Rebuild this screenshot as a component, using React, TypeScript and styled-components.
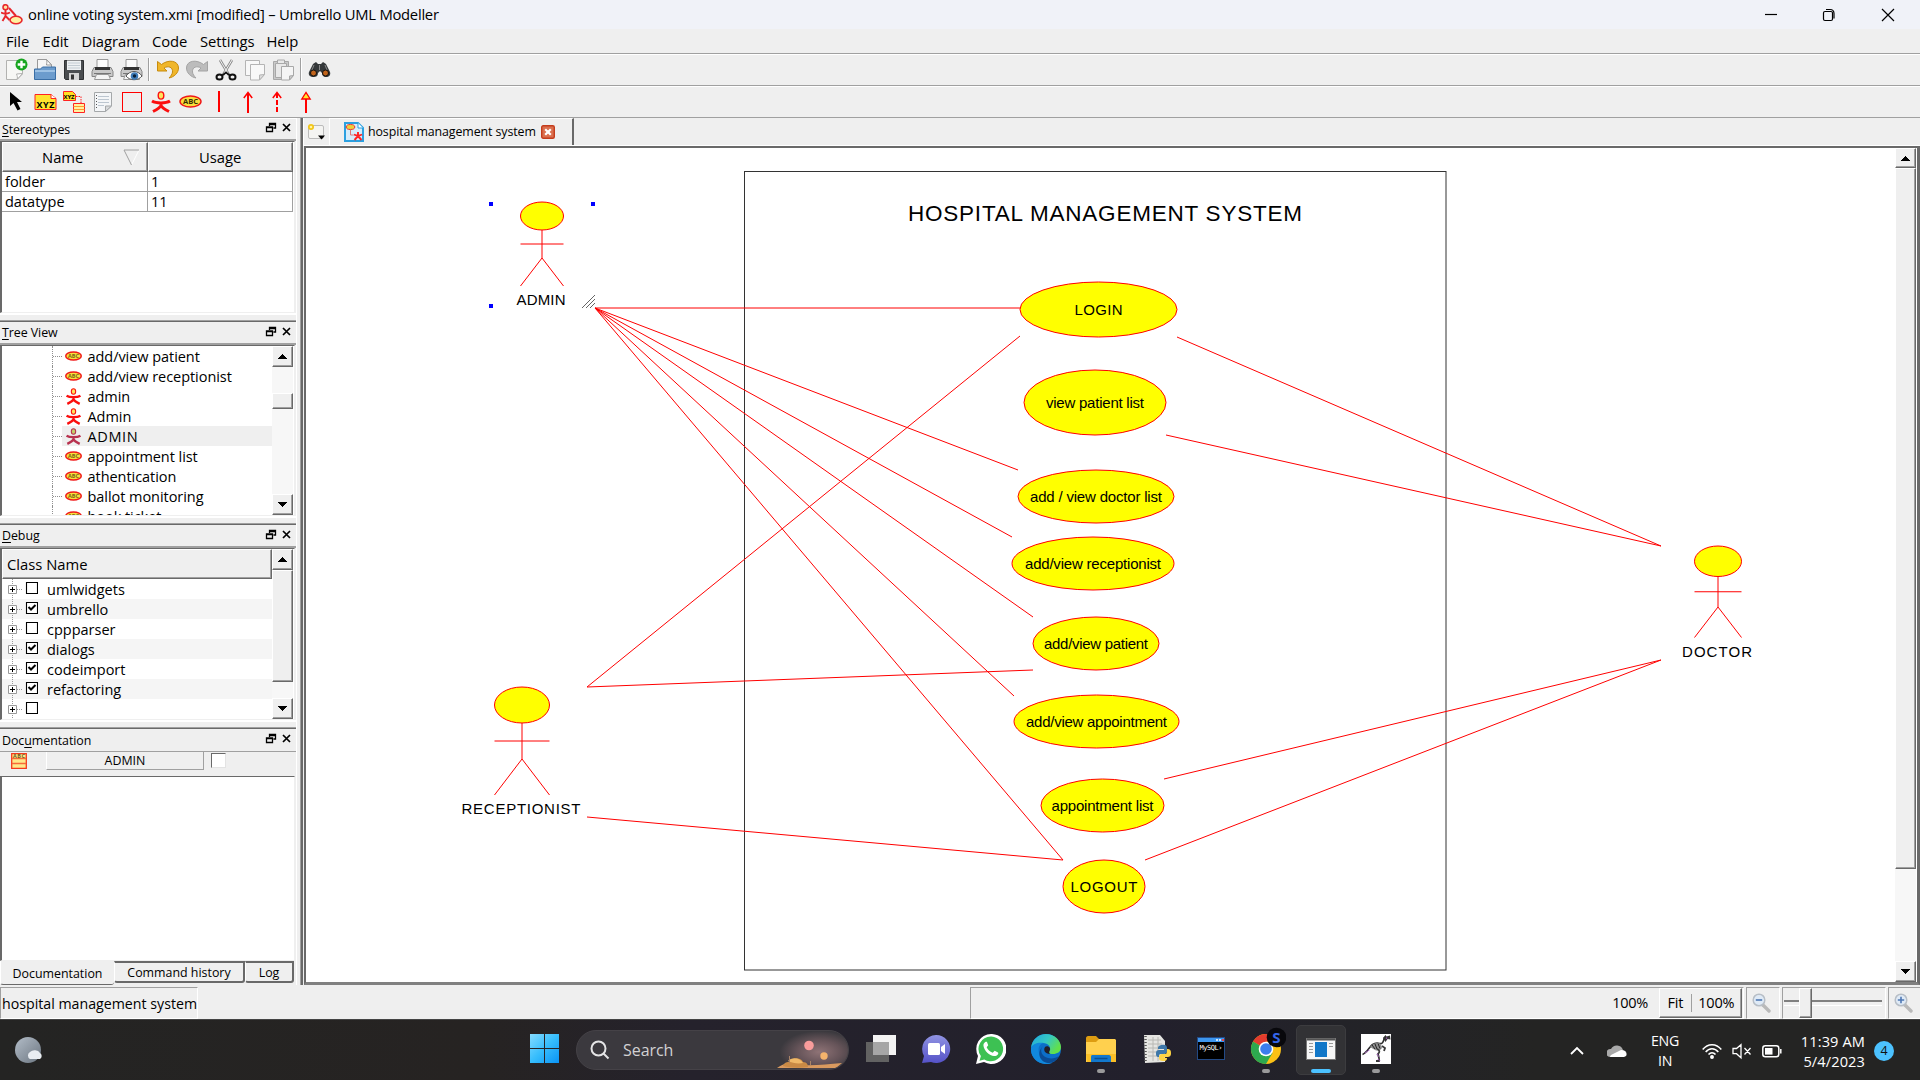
import React from 'react';
import styled, { createGlobalStyle, css } from 'styled-components';

const GlobalStyle = createGlobalStyle`
  * { box-sizing: border-box; }
  body { margin: 0; overflow: hidden; background: #efefef; }
`;

const ui = '"Open Sans", "Noto Sans", sans-serif';
const arial = '"Liberation Sans", Arial, sans-serif';

const raised = css`
  border-style: solid;
  border-width: 1px;
  border-color: #fff #696969 #696969 #fff;
  box-shadow: inset -1px -1px 0 #a0a0a0;
  background: #efefef;
`;
const sunken = css`
  border-style: solid;
  border-width: 1px;
  border-color: #a0a0a0 #fff #fff #a0a0a0;
`;

const Screen = styled.div`
  width: 1920px;
  height: 1080px;
  display: flex;
  flex-direction: column;
  background: #efefef;
  color: #000;
  font: 14.5px ${ui};
  white-space: nowrap;
  overflow: hidden;
`;
const Label = styled.span<{ $size?: number; $gap?: number }>`
  font-size: ${p => p.$size ?? 14.5}px;
  letter-spacing: ${p => p.$gap ?? 0}px;
  line-height: 1;
`;

/* ---------- window chrome ---------- */
const TitleBar = styled.header`
  height: 29px;
  flex: none;
  display: flex;
  align-items: center;
  background: #f0f2f8;
  padding-left: 1px;
  svg { flex: none; }
`;
const TitleText = styled(Label)`
  margin-left: 5px;
  flex: 1;
`;
const WindowButtons = styled.div`
  display: flex;
  width: 176px;
  height: 28px;
`;
const MenuBar = styled.nav`
  height: 24px;
  flex: none;
  display: flex;
  align-items: center;
  padding-left: 6px;
`;
const MenuItem = styled.div<{ $w: number }>`
  width: ${p => p.$w}px;
  font-size: 14.8px;
  line-height: 20px;
  letter-spacing: -0.05px;
`;
const ToolBar = styled.div<{ $indent?: number }>`
  height: 32px;
  flex: none;
  display: flex;
  align-items: center;
  border-top: 1px solid #a0a0a0;
  box-shadow: inset 0 1px 0 #fff;
  padding-left: ${p => p.$indent ?? 1}px;
`;
const Tool = styled.div`
  width: 29px;
  height: 28px;
  display: grid;
  place-items: center;
`;
const ToolSeparator = styled.div`
  width: 2px;
  height: 23px;
  margin: 0 3px 0 2px;
  background: #a0a0a0;
  border-right: 1px solid #fff;
`;

/* ---------- docks ---------- */
const Workspace = styled.main`
  height: 868px;
  flex: none;
  display: flex;
  border-top: 1px solid #a0a0a0;
`;
const Docks = styled.aside`
  width: 296px;
  flex: none;
  display: flex;
  flex-direction: column;
  border-top: 1px solid #fff;
`;
const Dock = styled.section<{ $h: number }>`
  height: ${p => p.$h}px;
  flex: none;
  display: flex;
  flex-direction: column;
`;
const DockTitle = styled.div<{ $h: number; $line?: number }>`
  height: ${p => p.$h}px;
  flex: none;
  display: flex;
  align-items: center;
  padding: 1px 1px 0 2px;
  border-bottom: ${p => p.$line ?? 2}px solid #a0a0a0;
  font-size: 12.4px;
  letter-spacing: -0.05px;
  span { flex: 1; line-height: 16px; }
  svg { margin-bottom: 3px; }
  u { text-underline-offset: 2px; text-decoration-thickness: 1px; }
`;
const DockGap = styled.div`
  height: 9px;
  flex: none;
  border-top: 2px solid #fff;
  border-bottom: 1px solid #696969;
  box-shadow: inset 0 -1px 0 #a0a0a0;
`;
const Frame = styled.div`
  flex: 1;
  width: 295px;
  min-height: 0;
  display: flex;
  background: #fff;
  border-top: 1px solid #696969;
  border-left: 2px solid #696969;
  border-right: 1px solid #efefef;
  border-bottom: 1px solid #efefef;
  overflow: hidden;
`;
const Table = styled.div`
  width: 291px;
  height: 70px;
  display: grid;
  grid-template-columns: 146px 145px;
  grid-template-rows: 30px 20px 20px;
`;
const HeadCell = styled.div<{ $indent?: number }>`
  ${raised}
  border-left-color: #fff;
  display: flex;
  align-items: center;
  justify-content: space-between;
  padding: 0 7px 0 ${p => p.$indent ?? 0}px;
  font-size: 14.8px;
`;
const Cell = styled.div`
  border-right: 1px solid #a0a0a0;
  border-bottom: 1px solid #a0a0a0;
  padding-left: 3px;
  line-height: 19px;
`;
const Rows = styled.div`
  width: 270px;
  flex: none;
  overflow: hidden;
`;
const TreeRow = styled.div`
  height: 20px;
  margin-left: 50px;
  display: flex;
  align-items: center;
  border-left: 1px dotted #909090;
  &::before { content: ''; width: 9px; border-top: 1px dotted #909090; }
`;
const TreeItem = styled.div<{ $on?: boolean }>`
  flex: 1;
  height: 20px;
  display: flex;
  align-items: center;
  gap: 6px;
  padding-left: 2.5px;
  line-height: 19px;
  letter-spacing: ${p => (p.$on ? 0.6 : -0.05)}px;
  background: ${p => (p.$on ? '#efefef' : 'transparent')};
`;
const ScrollTrack = styled.div`
  width: 21px;
  flex: none;
  display: flex;
  flex-direction: column;
  background: #f7f7f7;
`;
const ScrollButton = styled.div<{ $h?: number }>`
  ${raised}
  height: ${p => p.$h ?? 21}px;
  flex: none;
  display: grid;
  place-items: center;
`;
const Thumb = styled.div<{ $h: number }>`
  ${raised}
  height: ${p => p.$h}px;
  flex: none;
`;
const Space = styled.div<{ $h?: number }>`
  ${p => (p.$h === undefined ? 'flex: 1;' : `flex: none; height: ${p.$h}px;`)}
`;
const ClassHead = styled.div`
  ${raised}
  height: 30px;
  padding-left: 4px;
  line-height: 28px;
  font-size: 14.8px;
`;
const CheckRow = styled.div<{ $alt: boolean }>`
  height: 20px;
  display: flex;
  align-items: center;
  background: ${p => (p.$alt ? '#f5f5f5' : '#fff')};
  padding-left: 5px;
  line-height: 20px;
  svg { margin-right: 9px; flex: none; }
  span { padding-top: 2px; }
`;
const DocRow = styled.div`
  height: 24px;
  flex: none;
  display: flex;
  padding-left: 11px;
`;
const DocButton = styled.div`
  width: 158px;
  height: 18px;
  margin: 0 7px 0 19px;
  border: solid;
  border-width: 0 1px 1px 1px;
  border-color: #fff #a0a0a0 #a0a0a0 #fff;
  text-align: center;
  font-size: 12.4px;
  line-height: 18px;
`;
const DocCheck = styled.div`
  width: 15px;
  height: 15px;
  margin-top: 1px;
  background: #fff;
  border: 1px solid;
  border-color: #696969 #e3e3e3 #e3e3e3 #696969;
`;
const BottomTabs = styled.div`
  height: 24px;
  flex: none;
  display: flex;
  align-items: flex-start;
  font-size: 12.4px;
`;
const BottomTab = styled.div<{ $w: number; $on?: boolean }>`
  width: ${p => p.$w}px;
  height: ${p => (p.$on ? 24 : 22)}px;
  line-height: ${p => (p.$on ? 25 : 19)}px;
  text-align: center;
  border: solid;
  border-width: ${p => (p.$on ? '0 0 1px 1px' : '2px 2px 2px 1px')};
  border-color: #696969 #696969 #696969 #fff;
  border-radius: 0 0 3px 3px;
`;
const Splitter = styled.div`
  width: 7px;
  flex: none;
  border-left: 1px solid #fff;
  border-right: 2px solid #696969;
  box-shadow: inset -1px 0 0 #a0a0a0;
`;

/* ---------- document area ---------- */
const Document = styled.section`
  flex: 1;
  display: flex;
  flex-direction: column;
`;
const TabStrip = styled.div`
  height: 28px;
  flex: none;
  display: flex;
  border-bottom: 1px solid #fff;
`;
const NewTab = styled.div`
  width: 27px;
  height: 27px;
  display: grid;
  place-items: center;
  border-right: 1px solid #fff;
  border-left: 1px solid #fff;
`;
const ActiveTab = styled.div`
  width: 244px;
  height: 27px;
  display: flex;
  align-items: center;
  padding-left: 14px;
  border-right: 2px solid #696969;
  border-top: 1px solid #fff;
`;
const TabText = styled(Label)`
  width: 173px;
  margin-left: 4px;
`;
const CanvasFrame = styled.div`
  flex: 1;
  min-height: 0;
  display: flex;
  margin-left: 1px;
  background: #fff;
  border-style: solid;
  border-width: 2px 3px 3px 2px;
  border-color: #696969 #696969 #808080 #696969;
`;
const Diagram = styled.svg`
  display: block;
  width: 1589px;
  height: 834px;
  flex: none;
`;

/* ---------- status bar ---------- */
const StatusBar = styled.footer`
  height: 34px;
  flex: none;
  display: flex;
  align-items: flex-end;
`;
const StatusField = styled.div<{ $w: number; $ml?: number }>`
  ${sunken}
  width: ${p => p.$w}px;
  height: 32px;
  margin-left: ${p => p.$ml ?? 0}px;
  flex: none;
  display: flex;
  align-items: center;
  justify-content: flex-end;
`;
const StatusText = styled(Label)`
  width: 100%;
  padding: 2px 0 0 1px;
`;
const FitBox = styled.div`
  ${raised}
  width: 83px;
  height: 30px;
  margin: 0 1px 0 11px;
  display: flex;
  align-items: center;
`;
const FitPart = styled.div<{ $w: number; $line?: boolean }>`
  width: ${p => p.$w}px;
  text-align: center;
  line-height: 18px;
  border-right: ${p => (p.$line ? '1px solid #a0a0a0' : 'none')};
  letter-spacing: -0.2px;
`;
const ZoomButton = styled.div`
  width: 27px;
  svg { display: block; }
`;
const Slider = styled.div`
  width: 100%;
  height: 30px;
  padding-left: 1px;
  display: flex;
  align-items: center;
  &::before { content: ''; width: 15px; }
  &::after { content: ''; flex: 1; margin-right: 3px; }
  &::before, &::after {
    height: 3px;
    border-top: 2px solid #808080;
    border-bottom: 1px solid #fff;
  }
`;
const SliderThumb = styled.div`
  ${raised}
  width: 13px;
  height: 30px;
`;

/* ---------- taskbar ---------- */
const TaskBar = styled.div`
  height: 61px;
  flex: none;
  display: flex;
  align-items: flex-start;
  background: linear-gradient(90deg, #242423 0%, #262322 25%, #25222c 36%, #22202c 60%, #232328 70%, #242423 80%);
  border-top: 1px solid #444;
  color: #fff;
  svg { display: block; flex: none; }
`;
const Weather = styled.div`
  width: 517px;
  padding: 16px 0 0 14px;
`;
const Slot = styled.div<{ $on?: boolean }>`
  width: 50px;
  height: 50px;
  margin: 5px 2.5px 0;
  flex: none;
  display: flex;
  flex-direction: column;
  align-items: center;
  padding-top: 8px;
  border-radius: 5px;
  background: ${p => (p.$on ? '#323235' : 'transparent')};
  border: 1px solid ${p => (p.$on ? '#3c3c3f' : 'transparent')};
`;
const Indicator = styled.div<{ $on?: boolean }>`
  width: ${p => (p.$on ? 20 : 8)}px;
  height: 4px;
  margin-top: 5px;
  flex: none;
  border-radius: 2px;
  background: ${p => (p.$on ? '#4cc2ff' : '#9a9a9b')};
`;
const SearchBox = styled.div`
  width: 273px;
  height: 40px;
  margin: 10px 4px 0 4px;
  border-radius: 20px;
  border: 1px solid #454247;
  background: #3b393e;
  display: flex;
  align-items: center;
  padding-left: 13px;
  overflow: hidden;
`;
const SearchText = styled.span`
  flex: 1;
  padding-left: 13px;
  font-size: 16px;
  color: #d2d1d3;
  letter-spacing: -0.05px;
`;
const Tray = styled.div`
  margin-left: auto;
  width: 350px;
  height: 61px;
  padding-top: 1px;
  display: flex;
  align-items: center;
  font-size: 14.2px;
`;
const TrayText = styled.div<{ $w: number; $ml: number; $right?: boolean }>`
  width: ${p => p.$w}px;
  margin-left: ${p => p.$ml}px;
  line-height: 20px;
  font-size: ${p => (p.$right ? 14.6 : 14.2)}px;
  text-align: ${p => (p.$right ? 'right' : 'center')};
  letter-spacing: ${p => (p.$right ? 0.1 : -0.3)}px;
`;
const Badge = styled.div`
  width: 20px;
  height: 20px;
  margin-left: 9px;
  border-radius: 50%;
  background: #4cc2ff;
  color: #111;
  text-align: center;
  font-size: 12.5px;
  line-height: 20px;
`;
const TrayIcon = styled.div<{ $ml: number }>`
  margin-left: ${p => p.$ml}px;
`;

/* ---------- icons ---------- */
const Arrow = ({ up }: { up?: boolean }) => (
  <svg width="9" height="5" viewBox="0 0 9 5" shapeRendering="crispEdges">
    <path d={up ? 'M0 5L4.5 0L9 5z' : 'M0 0L4.5 5L9 0z'} />
  </svg>
);

const DockButtons = () => (
  <svg width="30" height="14" viewBox="0 0 30 14" fill="none" stroke="#000">
    <path d="M4.500 5V2.500h6v4.500h-2M4.500 3.500h6M1.500 6h6v4.500h-6zM1.500 6.500h6" strokeWidth="1.300" />
    <path d="M18 3l7 7M25 3l-7 7" strokeWidth="1.700" />
  </svg>
);

const AbcOval = ({ small }: { small?: boolean }) => (
  <svg width={small ? 17 : 23} height={small ? 10 : 13} viewBox="0 0 23 13">
    <ellipse cx="11.500" cy="6.500" rx="10.500" ry="5.500" fill="#f8e03c" stroke="#f01818" strokeWidth={small ? 2 : 1.5} />
    <text x="11.500" y="9.300" fontSize="7.500" fontWeight="bold" fontFamily={ui} textAnchor="middle" textLength="15" fill={small ? '#7a6412' : '#3a2c00'}>ABC</text>
  </svg>
);

const Person = ({ size = 22, color = '#fb0f0f', head = '#ffe45c' }: { size?: number; color?: string; head?: string }) => (
  <svg width={size} height={size} viewBox="0 0 22 22" fill="none" stroke={color}>
    <path d="M2 10c4 2.500 14 2.500 18 0M11 11v4M11 14.500c-1 2.500-4 4-8 6M11 14.500c1 2.500 4 4 8 6" strokeWidth="3" />
    <ellipse cx="11" cy="4.500" rx="2.800" ry="3.600" fill={head} strokeWidth="1.400" />
  </svg>
);

const XyzNote = () => (
  <svg width="23" height="18" viewBox="0 0 23 18">
    <path d="M1 1.500h16l5 4v11H1z" fill="#ffe32e" stroke="#f22" />
    <path d="M17 1.500v4h5" fill="#fff" stroke="#f22" />
    <text x="11.500" y="14.500" fontSize="9" fontWeight="bold" fontFamily={ui} textAnchor="middle" textLength="18">XYZ</text>
  </svg>
);

const XyzLinked = () => (
  <svg width="24" height="23" viewBox="0 0 24 23">
    <path d="M1.500 1.500h9l3 3v6h-12z" fill="#ffdf20" stroke="#f22" />
    <text x="7" y="9" fontSize="6" fontWeight="bold" fontFamily={ui} textAnchor="middle" textLength="11">XYZ</text>
    <path d="M14 6.500h5V13" fill="none" stroke="#f22" strokeDasharray="1.500 1" />
    <path d="M11.500 13.500h11v9h-11z" fill="#fff3a0" stroke="#f22" />
    <path d="M11.500 16.500h11M11.500 19.500h11" stroke="#f93" />
  </svg>
);

const FolderPage = () => (
  <svg width="24" height="23" viewBox="0 0 24 23">
    <path d="M4.500 1.500h9l5 5V15h-14z" fill="#f6f6f6" stroke="#999" />
    <path d="M13.500 1.500c1 2 0 4 0 5.500h5z" fill="#fff" stroke="#999" />
    <path d="M1.500 11h6l2-2h13v12.500h-21z" fill="#6c9ccd" stroke="#3a6ea5" />
    <path d="M2 13h20" stroke="#9cc1e4" strokeWidth="2" />
  </svg>
);

const NewPage = () => (
  <svg width="24" height="23" viewBox="0 0 24 23">
    <path d="M2.500 2.500h16V16l-5.500 5.500H2.500z" fill="#f7f7f5" stroke="#b2b2b0" />
    <path d="M18.500 15.500l-5.500 6c1-2 0-4-.5-5.500z" fill="#fff" stroke="#b2b2b0" />
    <circle cx="17.500" cy="6.500" r="6" fill="#18a51f" />
    <path d="M17.500 2.700v7.600M13.700 6.500h7.600" stroke="#fff" strokeWidth="2.400" />
  </svg>
);

const Floppy = () => (
  <svg width="22" height="22" viewBox="0 0 22 22">
    <path d="M1.500 1.500h19v19h-18l-1-1z" fill="#4a4d50" stroke="#2e3032" />
    <path d="M4 1.500h14V11H4z" fill="#eef1f3" />
    <path d="M5 4h12M5 6.500h12M5 9h12" stroke="#c3ccd3" />
    <path d="M6 14h10v7H6z" fill="#d4d4d4" />
    <path d="M8 15.500h3v5H8z" fill="#333" />
  </svg>
);

const Printer = ({ eye }: { eye?: boolean }) => (
  <svg width="23" height="23" viewBox="0 0 23 23">
    <path d="M6 1.500h11V11H6z" fill="#fbfbfb" stroke="#999" />
    <path d="M3 9.500h17l2 4v5H1v-5z" fill="#c9c9c9" stroke="#858585" />
    <path d="M4 9h15v3H4z" fill="#333" />
    <path d="M5.500 16.500h12l2 5h-16z" fill="#f5f5f5" stroke="#999" />
    <path d="M3 15.500h17" stroke="#777" />
    {eye && (
      <g>
        <path d="M6 18c4-6 12-6 16 0c-4 5-12 5-16 0z" fill="#fff" stroke="#555" />
        <circle cx="14.500" cy="18" r="3.800" fill="#3f7cb9" />
        <circle cx="14.500" cy="18" r="1.700" fill="#0b2036" />
      </g>
    )}
  </svg>
);

const Undo = ({ gray }: { gray?: boolean }) => (
  <svg width="24" height="20" viewBox="0 0 24 20">
    <path
      transform={gray ? 'matrix(-1 0 0 1 24 0)' : undefined}
      d="M1.500 1.500v9.500h9.500l-3-3c4-2.500 9-1 8.500 4c-.2 2-1.500 4-3.500 6c5-1 9.500-5 9.500-10c0-7.500-10-9-17-3.500z"
      fill={gray ? '#bcbcbc' : '#f0b62a'}
      stroke={gray ? '#a4a4a4' : '#c78b0d'}
    />
  </svg>
);

const Scissors = () => (
  <svg width="22" height="22" viewBox="0 0 22 22" fill="none">
    <path d="M5 1l9 15M17 1L8 16" stroke="#8b8b8b" strokeWidth="2.600" />
    <path d="M5 1l9 15M17 1L8 16" stroke="#f2f2f2" strokeWidth="1" />
    <ellipse cx="4.500" cy="18" rx="3" ry="2.600" stroke="#111" strokeWidth="2" />
    <ellipse cx="17.500" cy="18" rx="3" ry="2.600" stroke="#111" strokeWidth="2" />
    <path d="M7 16.500l4-3l4 3" stroke="#111" strokeWidth="1.600" />
  </svg>
);

const Copy = () => (
  <svg width="22" height="22" viewBox="0 0 22 22" fill="#f8f8f8" stroke="#b4b4b4">
    <path d="M1.500 1.500h14v15h-14z" />
    <path d="M6.500 5.500h14v10l-5 5.500h-9z" />
    <path d="M20.500 15.500l-5 5.500v-5z" fill="#ddd" />
  </svg>
);

const Paste = () => (
  <svg width="23" height="22" viewBox="0 0 23 22" stroke="#a8a8a8">
    <path d="M1.500 2.500h15v18h-15z" fill="#c9c9c9" />
    <path d="M3.500 4.500h11v14h-11z" fill="#e9e9e9" />
    <path d="M5.500 1h7v3.500h-7z" fill="#e9e9e9" />
    <path d="M9.500 7.500h12v9l-4 4.500h-8z" fill="#f5f5f5" />
    <path d="M21.500 16.500l-4 4.500v-4z" fill="#ccc" />
  </svg>
);

const Binoculars = () => (
  <svg width="23" height="16" viewBox="0 0 23 16">
    <path d="M5 2l3-2l2 2h3l2-2l3 2l4 8c1 3-1 5-4 5c-3 0-4-2-4-4l-2-2l-2 2c0 3-2 4-4 4c-4 0-6-2-5-5z" fill="#35383a" />
    <path d="M6 3l-2 5M17 3l2 5M11.500 3v5" stroke="#888" />
    <circle cx="5.500" cy="11" r="3" fill="#c2641b" stroke="#111" />
    <circle cx="17.500" cy="11" r="3" fill="#c2641b" stroke="#111" />
  </svg>
);

const Pointer = () => (
  <svg width="14" height="19" viewBox="0 0 14 19">
    <path d="M1 0v14l3.500-3l4 7.500l3-1.500l-3.500-7h5z" />
  </svg>
);

const NotePage = () => (
  <svg width="20" height="22" viewBox="0 0 20 22">
    <path d="M1.500 1.500h17V15l-6 5.500h-11z" fill="#f4f6f8" stroke="#a5a8aa" />
    <path d="M18.500 15l-6 5.500v-5.500z" fill="#d8dadc" stroke="#a5a8aa" />
    <path d="M5 5.500h11M5 8.500h11M5 11.500h11M5 14.500h6" stroke="#bcc6d0" />
    <path d="M3.500 4v14" stroke="#555" strokeDasharray="1 2" />
  </svg>
);

const LineTool = ({ kind }: { kind: 'line' | 'arrow' | 'dashed' | 'inherit' }) => (
  <svg width="12" height="22" viewBox="0 0 12 22" fill="none" stroke="#f00">
    <path d={kind === 'line' ? 'M6 0v21' : 'M6 2v20'} strokeWidth="2" strokeDasharray={kind === 'dashed' ? '5 2' : undefined} />
    {(kind === 'arrow' || kind === 'dashed') && <path d="M1.800 7L6 1.500L10.200 7" strokeWidth="1.500" />}
    {kind === 'inherit' && <path d="M1.800 8L6 1.500L10.200 8z" fill="#ffe92e" strokeWidth="1.300" />}
  </svg>
);

const AppLogo = () => (
  <svg width="22" height="21" viewBox="0 0 22 21" fill="none" stroke="#e8262b">
    <circle cx="4.500" cy="3.200" r="2.500" fill="#ffe0a0" strokeWidth="1.500" />
    <path d="M4.500 6v6M0 8.500c3 1.500 6 1.500 9 0M4.500 12l-3 5M4.500 12l4 4M8 4l7 8" strokeWidth="1.900" />
    <ellipse cx="15" cy="16" rx="6" ry="3.800" fill="#fff1a0" strokeWidth="1.600" />
  </svg>
);

const DiagramIcon = () => (
  <svg width="20" height="20" viewBox="0 0 20 20">
    <path d="M1 1h13l5 5v13H1z" fill="#d6ecfa" stroke="#2ba0e0" strokeWidth="2" />
    <path d="M14 1v5h5" fill="#fff" stroke="#2ba0e0" />
    <ellipse cx="6.500" cy="5" rx="4.300" ry="2.500" fill="#ecd23a" stroke="#e33" />
    <path d="M6.500 8v5h3" fill="none" stroke="#d77" />
    <path d="M10 12.500c2 1 6 1 8 0M14 10v4M14 14l-3.500 4M14 14l3.500 4" fill="none" stroke="#f22" strokeWidth="1.900" />
  </svg>
);

const NewTabIcon = () => (
  <svg width="19" height="18" viewBox="0 0 19 18">
    <rect x="1.500" y="2.500" width="15" height="13" rx="1.500" fill="#f4f4f2" stroke="#bbb" />
    <circle cx="4" cy="4" r="3" fill="#f2c518" />
    <circle cx="4" cy="4" r="1.300" fill="#fff3a0" />
    <path d="M11 12.500h7l-3.500 4z" />
  </svg>
);

const CloseTab = () => (
  <svg width="14" height="14" viewBox="0 0 14 14">
    <rect x=".7" y=".7" width="12.600" height="12.600" rx="1.500" fill="#db6f4e" stroke="#c43c1c" strokeWidth="1.400" />
    <path d="M4.200 4.200l5.600 5.600M9.800 4.200L4.200 9.800" stroke="#fff" strokeWidth="2.200" />
  </svg>
);

const Magnifier = ({ plus }: { plus?: boolean }) => (
  <svg width="19" height="20" viewBox="0 0 19 20">
    <path d="M11 12l6 6" stroke="#b9b9b9" strokeWidth="3.400" strokeLinecap="round" />
    <circle cx="7" cy="7" r="5.800" fill="#dfeaf6" stroke="#b7bec6" strokeWidth="1.500" />
    <path d={plus ? 'M3.800 7h6.400M7 3.800v6.400' : 'M3.800 7h6.400'} stroke="#4f78b4" strokeWidth="1.600" />
  </svg>
);

const DocIcon = () => (
  <svg width="16" height="17" viewBox="0 0 16 17">
    <path d="M.7 1.700h14.600v14.600H.7z" fill="#ffe98a" stroke="#f43a1c" strokeWidth="1.300" />
    <path d="M1 6.500h14M1 11.500h14" stroke="#f76a38" strokeWidth="1.400" />
    <text x="8" y="5.500" fontSize="5.500" fontWeight="bold" fontFamily={ui} textAnchor="middle" textLength="12" fill="#6d5b20">ABC</text>
  </svg>
);

const TreeCheck = ({ on }: { on: boolean }) => (
  <svg width="31" height="20" viewBox="0 0 31 20" fill="none">
    <path d="M5.500 0v20M10 10.500h6" stroke="#999" strokeDasharray="1 1" />
    <path d="M1.500 6.500h8v8h-8z" fill="#fff" stroke="#999" />
    <path d="M3 10.500h5M5.500 8v5" stroke="#000" />
    <path d="M19.500 3.500h11v11h-11z" fill="#fff" stroke="#000" strokeWidth="1.100" />
    {on && <path d="M21.500 8l2.500 2.500l4.500-4.500" stroke="#000" strokeWidth="2" />}
  </svg>
);

/* ---------- diagram ---------- */
const links = [
  [595, 308, 1020, 308], [595, 308, 1018, 470], [595, 308, 1012, 537], [595, 308, 1033, 617],
  [595, 308, 1014, 696], [595, 308, 1063, 860], [587, 687, 1020, 336], [587, 687, 1033, 670],
  [587, 817, 1063, 860], [1177, 337, 1661, 546], [1166, 435, 1661, 546], [1164, 779, 1661, 660],
  [1145, 860, 1661, 660],
];
type UseCase = { name: string; cx: number; cy: number; rx: number; ry: number; w: number };
const useCases: UseCase[] = [
  { name: 'LOGIN', cx: 1098.5, cy: 309.5, rx: 78.5, ry: 27.5, w: 48 },
  { name: 'view patient list', cx: 1095, cy: 402.5, rx: 71, ry: 32.5, w: 98 },
  { name: 'add / view doctor list', cx: 1096, cy: 496.5, rx: 78, ry: 26.5, w: 132 },
  { name: 'add/view receptionist', cx: 1093, cy: 563.5, rx: 81, ry: 26.5, w: 136 },
  { name: 'add/view patient', cx: 1096, cy: 643.5, rx: 63, ry: 26.5, w: 104 },
  { name: 'add/view appointment', cx: 1096.5, cy: 721.5, rx: 82.5, ry: 26.5, w: 141 },
  { name: 'appointment list', cx: 1102.5, cy: 805.5, rx: 61.5, ry: 26.5, w: 102 },
  { name: 'LOGOUT', cx: 1104, cy: 886.5, rx: 41, ry: 26.5, w: 67 },
];
type Actor = { name: string; cx: number; top: number; rx: number; h: number; w: number; base: number };
const actors: Actor[] = [
  { name: 'ADMIN', cx: 542, top: 202, rx: 21.5, h: 28, w: 49, base: 305 },
  { name: 'RECEPTIONIST', cx: 522, top: 687, rx: 27.5, h: 36, w: 119, base: 814 },
  { name: 'DOCTOR', cx: 1718, top: 546, rx: 23.5, h: 30.5, w: 70, base: 657 },
];

const UmlDiagram = () => (
  <Diagram viewBox="306 148 1589 834" fontFamily={arial} fontSize="15" textAnchor="middle">
    <rect x="744.500" y="171.500" width="701.500" height="798.500" fill="none" stroke="#333" />
    <text x="1105" y="221" fontSize="22.500" textLength="394">HOSPITAL MANAGEMENT SYSTEM</text>
    <g stroke="#f00" strokeWidth="1">
      {links.map(([a, b, c, d], i) => <line key={i} x1={a} y1={b} x2={c} y2={d} />)}
    </g>
    {useCases.map(u => (
      <g key={u.name}>
        <ellipse cx={u.cx} cy={u.cy} rx={u.rx} ry={u.ry} fill="#ff0" stroke="#f00" />
        <text x={u.cx} y={u.cy + 5.5} textLength={u.w}>{u.name}</text>
      </g>
    ))}
    {actors.map(a => {
      const foot = a.top + a.h * 3;
      return (
        <g key={a.name}>
          <g stroke="#f00" fill="none">
            <ellipse cx={a.cx} cy={a.top + a.h / 2} rx={a.rx} ry={a.h / 2} fill="#ff0" />
            <path d={`M${a.cx} ${a.top + a.h}V${a.top + a.h * 2}M${a.cx - a.rx} ${a.top + a.h * 1.5}h${a.rx * 2}`} />
            <path d={`M${a.cx - a.rx} ${foot}L${a.cx} ${a.top + a.h * 2}L${a.cx + a.rx} ${foot}`} />
          </g>
          <text x={a.cx - 1} y={a.base} textLength={a.w}>{a.name}</text>
        </g>
      );
    })}
    <g fill="#00f">
      <rect x="489" y="202" width="4" height="4" />
      <rect x="591" y="202" width="4" height="4" />
      <rect x="489" y="304" width="4" height="4" />
    </g>
    <path d="M582 308l13-13M586 308l9-9M590 308l5-5" stroke="#666" />
  </Diagram>
);

/* ---------- taskbar pictures ---------- */
const WinLogo = () => (
  <svg width="29" height="29" viewBox="0 0 29 29">
    <defs>
      <linearGradient id="win" x1="0" y1="0" x2="1" y2="1">
        <stop offset="0" stopColor="#85dbff" />
        <stop offset=".5" stopColor="#36bdfc" />
        <stop offset="1" stopColor="#0a93f5" />
      </linearGradient>
    </defs>
    <path d="M0 0h14v14H0zM15 0h14v14H15zM0 15h14v14H0zM15 15h14v14H15z" fill="url(#win)" />
  </svg>
);

const SearchScene = () => (
  <svg width="72" height="38" viewBox="0 0 72 38">
    <defs>
      <radialGradient id="dusk" cx=".6" cy=".55" r=".55">
        <stop offset="0" stopColor="#8f7376" />
        <stop offset=".55" stopColor="#665459" />
        <stop offset="1" stopColor="#3b393e" />
      </radialGradient>
    </defs>
    <rect width="72" height="38" fill="url(#dusk)" />
    <circle cx="33" cy="14.500" r="4.800" fill="#f99c9b" />
    <circle cx="48" cy="25" r="3.700" fill="#f5b36c" />
    <path d="M1 37c8-6 14-4 24-3c14 1 26-1 41-2l-6 5z" fill="#d99a5f" />
    <path d="M7 35c1-4 5-4 6-4c3-5 12-5 14 0c4 0 5 3 5 5c-8 1-18 1-25-1z" fill="#c98a45" />
    <path d="M12 30c3-4 12-4 15 2c-5 1-11 0-15-2z" fill="#efb868" />
    <path d="M13.500 25v7M34.500 30v4" stroke="#a98468" />
  </svg>
);

const TaskView = () => (
  <svg width="30" height="30" viewBox="0 0 30 30">
    <rect x="7" y="1" width="23" height="20" fill="#f3f3f3" />
    <rect x="0" y="8" width="23" height="20" fill="#626262" />
    <rect x="7" y="8" width="16" height="13" fill="#a6a6a6" />
  </svg>
);

const Chat = () => (
  <svg width="30" height="30" viewBox="0 0 30 30">
    <defs>
      <linearGradient id="chat" x1="0" y1="0" x2="0" y2="1">
        <stop offset="0" stopColor="#9093e2" />
        <stop offset="1" stopColor="#5552c8" />
      </linearGradient>
    </defs>
    <path d="M15 1a14 14 0 1 1-5 27L1 29l2-7A14 14 0 0 1 15 1z" fill="url(#chat)" />
    <rect x="7" y="9" width="12" height="12" rx="1.500" fill="#fff" />
    <path d="M20 13l4-3v10l-4-3z" fill="#fff" />
  </svg>
);

const WhatsApp = () => (
  <svg width="30" height="30" viewBox="0 0 30 30">
    <path d="M15 0a15 15 0 1 1-7 28L0 30l2-8A15 15 0 0 1 15 0z" fill="#fff" />
    <path d="M15.300 2.500a12.400 12.400 0 1 1-7 23L3.500 26.800l1.400-4.700A12.400 12.400 0 0 1 15.300 2.500z" fill="#3dc153" />
    <path d="M11 8c-1-1-4 1-3.500 4c.7 5 6 9.500 10.500 10c3 .3 5-2 4-3.500l-3.300-1.700l-2 2c-3-1-5-3.300-6-5.500l1.500-2z" fill="#fff" />
  </svg>
);

const Edge = () => (
  <svg width="30" height="30" viewBox="0 0 30 30">
    <defs>
      <linearGradient id="edgeTop" x1="0" y1="0" x2="1" y2=".5">
        <stop offset="0" stopColor="#1fa7e0" />
        <stop offset=".55" stopColor="#35c8c4" />
        <stop offset="1" stopColor="#62e04a" />
      </linearGradient>
    </defs>
    <circle cx="15" cy="15" r="15" fill="#0c6fc9" />
    <path d="M0 14C1 5 8 0 15 0c9 0 15 7 15 13c0 5-4 7-8 7c-4 0-5-1-4-3c3-4-1-8-6-8C6 9 1 11 0 14z" fill="url(#edgeTop)" />
    <path d="M0 14c2-5 8-6 13-5c-6 1-7 8-3 14c3 5 8 6 11 6C10 33-1 25 0 14z" fill="#1188dd" />
    <path d="M12 12c-4 4-1 11 5 12c4 1 8 0 11-2c-3 5-7 7-11 7C9 28 5 19 12 12z" fill="#0a4c96" />
    <path d="M14 13c2-2 6 0 5 3c-1 2-1 3 0 4c-5 0-7-4-5-7z" fill="#211f29" />
  </svg>
);

const Explorer = () => (
  <svg width="30" height="30" viewBox="0 0 30 30">
    <path d="M0 4c0-1 1-2 2-2h8l3 3v8H0z" fill="#dd9c12" />
    <path d="M0 8h10l3-3h16l1 1v22H0z" fill="#ffd04e" />
    <path d="M0 20h30v7c0 1-1 1-1 1H1z" fill="#fbbf26" />
    <path d="M5 28v-5c0-2 1-2 2-2h16c1 0 2 1 2 2v5z" fill="#1278cd" />
    <path d="M8.500 24.500h13" stroke="#084f93" strokeWidth="1.500" />
  </svg>
);

const PythonFile = () => (
  <svg width="30" height="30" viewBox="0 0 30 30">
    <path d="M3 1h16l5 6v21l-20 1z" fill="#e5e5e2" />
    <path d="M7 6h13M7 10h14M7 14h14M7 18h10M7 22h10M12 3v24M17 3v24" stroke="#b8b8b4" />
    <path d="M4.500 2v26" stroke="#555" strokeWidth="2.500" strokeDasharray="1 2" />
    <path d="M20 11c4-1 6 0 6 3v3c0 2-1 3-3 3h-3c-2 0-2 1-2 3c-3 0-3-2-3-4s1-3 3-3h5v-1h-6c0-2 0-3 3-4z" fill="#3d77a8" />
    <path d="M26 15c3 0 4 1 4 4s-1 4-4 4h-3c1 1 2 1 3 1c0 3-2 3-4 3c-3 0-4-1-4-3c0-3 1-4 3-4h3c2 0 2-2 2-5z" fill="#ffd545" />
  </svg>
);

const MySql = () => (
  <svg width="28" height="30" viewBox="0 0 28 30">
    <rect x=".5" y="3.500" width="27" height="22" fill="#000" stroke="#234a86" />
    <rect x="1" y="4" width="26" height="4" fill="#3d96ee" />
    <path d="M19 6h2M22 6h2" stroke="#fff" strokeWidth="1.500" />
    <path d="M25 6h2" stroke="#e44" strokeWidth="2" />
    <text x="14" y="16" fill="#fff" fontSize="7" fontFamily='"DejaVu Sans Mono", monospace' textAnchor="middle" textLength="23">MySQL›</text>
  </svg>
);

const ChromeSvg = styled.svg`
  margin: -8px 0 -2px;
`;
const Chrome = () => (
  <ChromeSvg width="40" height="40" viewBox="-5 -8 40 40">
    <circle cx="15" cy="15" r="15" fill="#fbc116" />
    <path d="M15 15L2 7.500A15 15 0 0 1 28 7.500H15z" fill="#e33b2e" />
    <path d="M2 7.500A15 15 0 0 0 15 30l6.500-11L15 15z" fill="#2da94f" />
    <circle cx="15" cy="15" r="7.300" fill="#fff" />
    <circle cx="15" cy="15" r="5.800" fill="#3b7ded" />
    <circle cx="25.500" cy="3.500" r="9.800" fill="#08080c" />
    <text x="25.500" y="9" fill="#3465e8" fontSize="15" fontWeight="bold" fontFamily={ui} textAnchor="middle">S</text>
  </ChromeSvg>
);

const AppWindow = () => (
  <svg width="30" height="30" viewBox="0 0 30 30">
    <rect x=".5" y="4.500" width="29" height="21" fill="#f6f6f6" stroke="#777" />
    <path d="M1 5.500h28" stroke="#555" strokeWidth="2" />
    <rect x="9" y="8" width="12" height="15" fill="#1177c8" />
    <path d="M3 9.500h4M3 12.500h4M3 15.500h4M3 18.500h4M23 9.500h4M23 12.500h4" stroke="#999" />
  </svg>
);

const Dino = () => (
  <svg width="30" height="30" viewBox="0 0 30 30">
    <rect width="30" height="30" fill="#fff" />
    <path d="M1.500 20.500c3-1 5-4 8-8c2-3 6-4 9-3c3 1 4-2 5-6" fill="none" stroke="#2c2c2c" strokeWidth="1.600" />
    <path d="M22 4l2.500-3l1 1.500l3.500-1l.5 4l-3-.500l-2 3z" fill="#333" />
    <path d="M9 13c3-4 8-5 11-3l1 4c-2 3-5 3-7 2z" fill="#8f8f8f" />
    <path d="M11 11l3 4M14 10l2 5M17 9.500l2 5" stroke="#222" />
    <path d="M16 15c3 1 3 3 1 5l1 4v3h-3M21 12l3 2l-1 3" fill="none" stroke="#3a3a3a" strokeWidth="1.800" />
    <path d="M4 19l4-3M16 20l2 3M17 25l2 2M25 4l2 1" stroke="#a05bb8" strokeDasharray="1 1" strokeWidth="1.500" />
  </svg>
);

const WeatherIcon = () => (
  <svg width="30" height="28" viewBox="0 0 30 28">
    <defs>
      <linearGradient id="moon" x1="0" y1="0" x2="1" y2="1">
        <stop offset="0" stopColor="#b3bdc8" />
        <stop offset="1" stopColor="#6c7681" />
      </linearGradient>
    </defs>
    <circle cx="14" cy="14" r="13" fill="url(#moon)" />
    <path d="M16 23a4 4 0 0 1 0-7a6 5 0 0 1 10 1a3.500 3.500 0 0 1 0 6z" fill="#e9edf2" />
  </svg>
);

const TrayGlyph = ({ name }: { name: 'up' | 'cloud' | 'wifi' | 'mute' | 'battery' }) => (
  <svg width={name === 'up' ? 14 : 20} height="18" viewBox={name === 'up' ? '0 0 14 18' : '0 0 20 18'} fill="none" stroke="#fff" strokeWidth="1.500">
    {name === 'up' && <path d="M1 12l6-6l6 6" strokeWidth="1.800" />}
    {name === 'cloud' && (
      <g stroke="none">
        <path d="M3 15a4 4 0 0 1 1-8a6.500 6.500 0 0 1 12 1c4 1 4 4 3 6z" fill="#a9a9a9" />
        <path d="M3 15a3 3 0 0 1 1-2l10-5c5 0 6 4 5 6l-2 1z" fill="#fff" />
      </g>
    )}
    {name === 'wifi' && (
      <g>
        <path d="M.7 7.500c5-6.500 13.600-6.500 18.600 0M3.700 10c3.500-4.500 9.100-4.500 12.600 0M6.500 12.500c2-2.500 5-2.500 7 0" />
        <circle cx="10" cy="15" r="1.200" fill="#fff" />
      </g>
    )}
    {name === 'mute' && (
      <path d="M1 6.500h3.500L9 2.700v13L4.500 11.700H1zM12.500 6l6 6.500M18.500 6l-6 6.500" strokeWidth="1.300" />
    )}
    {name === 'battery' && (
      <g>
        <rect x=".8" y="3.800" width="16" height="11" rx="2.500" />
        <rect x="3" y="6" width="7.500" height="6.600" fill="#fff" stroke="none" />
        <path d="M18.800 7v4.500" />
      </g>
    )}
  </svg>
);

/* ---------- data ---------- */
const menus: [string, number][] = [['File', 36.5], ['Edit', 39], ['Diagram', 70.5], ['Code', 48], ['Settings', 66.5], ['Help', 40]];
const tree = [
  ['add/view patient', 'case'], ['add/view receptionist', 'case'], ['admin', 'actor'], ['Admin', 'actor'],
  ['ADMIN', 'current'], ['appointment list', 'case'], ['athentication', 'case'], ['ballot monitoring', 'case'], ['book ticket', 'case'],
];
const classes: [string, boolean][] = [
  ['umlwidgets', false], ['umbrello', true], ['cppparser', false], ['dialogs', true],
  ['codeimport', true], ['refactoring', true], ['', false],
];

export default function App() {
  return (
    <Screen>
      <GlobalStyle />
      <TitleBar>
        <AppLogo />
        <TitleText $size={14.8} $gap={-0.26}>online voting system.xmi [modified] – Umbrello UML Modeller</TitleText>
        <WindowButtons>
          <svg width="176" height="28" viewBox="1744 0 176 28" fill="none" stroke="#000" strokeWidth="1.200">
            <path d="M1765 13.500h12" />
            <path d="M1826 8.500h4q4 0 4 4v5" />
            <rect x="1823.500" y="10.500" width="9" height="9" rx="1.500" />
            <path d="M1882 8l12 12M1894 8l-12 12" />
          </svg>
        </WindowButtons>
      </TitleBar>
      <MenuBar>
        {menus.map(([name, w]) => <MenuItem key={name} $w={w}>{name}</MenuItem>)}
      </MenuBar>
      <ToolBar>
        <Tool><NewPage /></Tool>
        <Tool><FolderPage /></Tool>
        <Tool><Floppy /></Tool>
        <Tool><Printer /></Tool>
        <Tool><Printer eye /></Tool>
        <ToolSeparator />
        <Tool><Undo /></Tool>
        <Tool><Undo gray /></Tool>
        <Tool><Scissors /></Tool>
        <Tool><Copy /></Tool>
        <Tool><Paste /></Tool>
        <ToolSeparator />
        <Tool><Binoculars /></Tool>
      </ToolBar>
      <ToolBar $indent={1.5}>
        <Tool><Pointer /></Tool>
        <Tool><XyzNote /></Tool>
        <Tool><XyzLinked /></Tool>
        <Tool><NotePage /></Tool>
        <Tool>
          <svg width="20" height="20" viewBox="0 0 20 20"><rect x=".5" y=".5" width="19" height="19" fill="none" stroke="#f00" /></svg>
        </Tool>
        <Tool><Person /></Tool>
        <Tool><AbcOval /></Tool>
        <Tool><LineTool kind="line" /></Tool>
        <Tool><LineTool kind="arrow" /></Tool>
        <Tool><LineTool kind="dashed" /></Tool>
        <Tool><LineTool kind="inherit" /></Tool>
      </ToolBar>

      <Workspace>
        <Docks>
          <Dock $h={194}>
            <DockTitle $h={22}><span><u>S</u>tereotypes</span><DockButtons /></DockTitle>
            <Frame>
              <Table>
                <HeadCell $indent={39}>
                  <span>Name</span>
                  <svg width="17" height="17" viewBox="0 0 17 17" fill="none"><path d="M16 1L8.500 16" stroke="#fff" /><path d="M8.500 16L1 1h15" stroke="#a0a0a0" /></svg>
                </HeadCell>
                <HeadCell $indent={50}>Usage</HeadCell>
                <Cell>folder</Cell><Cell>1</Cell>
                <Cell>datatype</Cell><Cell>11</Cell>
              </Table>
            </Frame>
          </Dock>
          <DockGap />
          <Dock $h={194}>
            <DockTitle $h={23}><span><u>T</u>ree View</span><DockButtons /></DockTitle>
            <Frame>
              <Rows>
                {tree.map(([name, kind]) => (
                  <TreeRow key={name}>
                    <TreeItem $on={kind === 'current'}>
                      {kind === 'case' && <AbcOval small />}
                      {kind === 'actor' && <Person size={17} />}
                      {kind === 'current' && <Person size={17} color="#b8324f" head="#c2cf6a" />}
                      <span>{name}</span>
                    </TreeItem>
                  </TreeRow>
                ))}
              </Rows>
              <ScrollTrack>
                <ScrollButton><Arrow up /></ScrollButton>
                <Space $h={26} />
                <Thumb $h={16} />
                <Space />
                <ScrollButton><Arrow /></ScrollButton>
              </ScrollTrack>
            </Frame>
          </Dock>
          <DockGap />
          <Dock $h={195}>
            <DockTitle $h={23}><span><u>D</u>ebug</span><DockButtons /></DockTitle>
            <Frame>
              <Rows>
                <ClassHead>Class Name</ClassHead>
                {classes.map(([name, on], i) => (
                  <CheckRow key={i} $alt={i % 2 === 1}><TreeCheck on={on} /><span>{name}</span></CheckRow>
                ))}
              </Rows>
              <ScrollTrack>
                <ScrollButton><Arrow up /></ScrollButton>
                <Thumb $h={112} />
                <Space />
                <ScrollButton><Arrow /></ScrollButton>
              </ScrollTrack>
            </Frame>
          </Dock>
          <DockGap />
          <Dock $h={232}>
            <DockTitle $h={23} $line={1}><span>Doc<u>u</u>mentation</span><DockButtons /></DockTitle>
            <DocRow>
              <DocIcon />
              <DocButton>ADMIN</DocButton>
              <DocCheck />
            </DocRow>
            <Frame />
          </Dock>
          <BottomTabs>
            <BottomTab $w={114} $on>Documentation</BottomTab>
            <BottomTab $w={131}>Command history</BottomTab>
            <BottomTab $w={49}>Log</BottomTab>
          </BottomTabs>
        </Docks>
        <Splitter />
        <Document>
          <TabStrip>
            <NewTab><NewTabIcon /></NewTab>
            <ActiveTab>
              <DiagramIcon />
              <TabText $size={12.4} $gap={-0.1}>hospital management system</TabText>
              <CloseTab />
            </ActiveTab>
          </TabStrip>
          <CanvasFrame>
            <UmlDiagram />
            <ScrollTrack>
              <ScrollButton $h={20}><Arrow up /></ScrollButton>
              <Thumb $h={701} />
              <Space />
              <ScrollButton><Arrow /></ScrollButton>
            </ScrollTrack>
          </CanvasFrame>
        </Document>
      </Workspace>

      <StatusBar>
        <StatusField $w={198}><StatusText $size={14.2}>hospital management system</StatusText></StatusField>
        <StatusField $w={774} $ml={772}>
          <Label $gap={-0.3}>100%</Label>
          <FitBox>
            <FitPart $w={32} $line>Fit</FitPart>
            <FitPart $w={50}>100%</FitPart>
          </FitBox>
        </StatusField>
        <StatusField $w={34} $ml={2}><ZoomButton><Magnifier /></ZoomButton></StatusField>
        <StatusField $w={104} $ml={2}>
          <Slider><SliderThumb /></Slider>
        </StatusField>
        <StatusField $w={34} $ml={2}><ZoomButton><Magnifier plus /></ZoomButton></StatusField>
      </StatusBar>

      <TaskBar>
        <Weather><WeatherIcon /></Weather>
        <Slot><WinLogo /></Slot>
        <SearchBox>
          <svg width="20" height="20" viewBox="0 0 20 20" fill="none" stroke="#e4e4e5" strokeWidth="2">
            <circle cx="8.500" cy="8.500" r="7" /><path d="M13.500 13.500l5 5" />
          </svg>
          <SearchText>Search</SearchText>
          <SearchScene />
        </SearchBox>
        <Slot><TaskView /></Slot>
        <Slot><Chat /></Slot>
        <Slot><WhatsApp /></Slot>
        <Slot><Edge /></Slot>
        <Slot><Explorer /><Indicator /></Slot>
        <Slot><PythonFile /></Slot>
        <Slot><MySql /></Slot>
        <Slot><Chrome /><Indicator /></Slot>
        <Slot $on><AppWindow /><Indicator $on /></Slot>
        <Slot><Dino /><Indicator /></Slot>
        <Tray>
          <TrayIcon $ml={0}><TrayGlyph name="up" /></TrayIcon>
          <TrayIcon $ml={23}><TrayGlyph name="cloud" /></TrayIcon>
          <TrayText $w={40} $ml={18}>ENG<br />IN</TrayText>
          <TrayIcon $ml={17}><TrayGlyph name="wifi" /></TrayIcon>
          <TrayIcon $ml={10}><TrayGlyph name="mute" /></TrayIcon>
          <TrayIcon $ml={10}><TrayGlyph name="battery" /></TrayIcon>
          <TrayText $w={74} $ml={9} $right>11:39 AM<br />5/4/2023</TrayText>
          <Badge>4</Badge>
        </Tray>
      </TaskBar>
    </Screen>
  );
}
